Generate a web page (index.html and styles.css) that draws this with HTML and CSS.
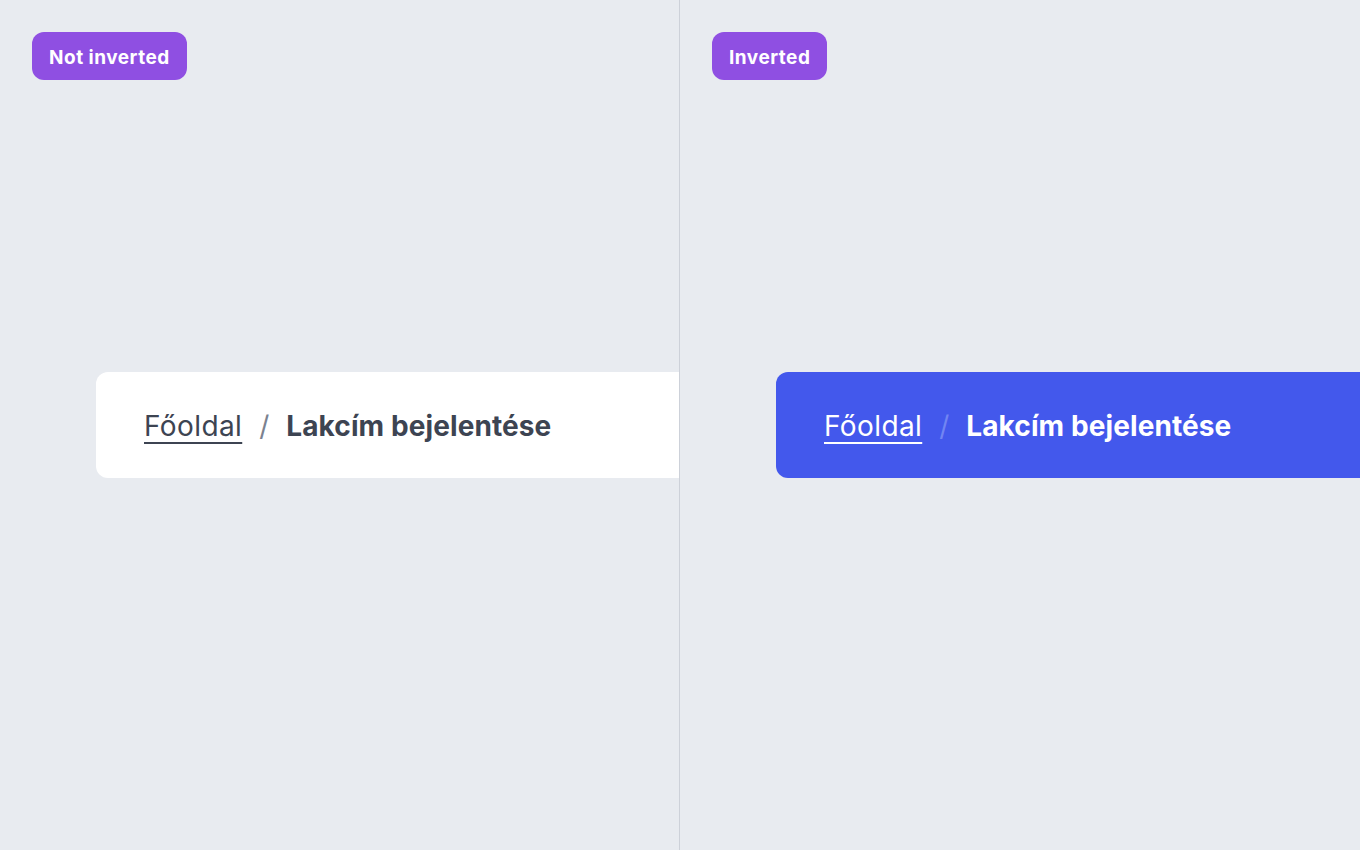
FILE: index.html
```html
<!DOCTYPE html>
<html lang="hu">
<head>
    <meta charset="UTF-8">
    <meta name="viewport" content="width=device-width, initial-scale=1.0">
    <title>Breadcrumb</title>
    <link rel="stylesheet" href="styles.css">
</head>
<body>
    <div class="stage">
        <!-- Not inverted -->
        <section class="panel panel-left">
            <span class="badge">Not inverted</span>
            <nav class="breadcrumb">
                <a href="#" class="crumb-link">Főoldal</a>
                <span class="crumb-sep">/</span>
                <span class="crumb-current">Lakcím bejelentése</span>
            </nav>
        </section>

        <!-- Inverted -->
        <section class="panel">
            <span class="badge">Inverted</span>
            <nav class="breadcrumb breadcrumb-inverted">
                <a href="#" class="crumb-link">Főoldal</a>
                <span class="crumb-sep">/</span>
                <span class="crumb-current">Lakcím bejelentése</span>
            </nav>
        </section>
    </div>
</body>
</html>
```

FILE: styles.css
```css
/* Reset */
* {
    margin: 0;
    padding: 0;
    box-sizing: border-box;
}

body {
    font-family: Inter, "Noto Sans", sans-serif;
    background: #e8ebf0;
    color: #3d4452;
}

.stage {
    display: grid;
    grid-template-columns: 680px 680px;
    height: 850px;
}

.panel {
    position: relative;
    display: flex;
    align-items: center;
    padding-left: 96px;
}

.panel-left {
    border-right: 1px solid #cdd1d9;
}

.badge {
    position: absolute;
    top: 32px;
    left: 32px;
    height: 48px;
    padding: 2px 17px 0;
    display: flex;
    align-items: center;
    background: #8f4fe2;
    color: #fff;
    font-size: 19px;
    font-weight: 700;
    letter-spacing: 0.5px;
    border-radius: 12px;
}

.breadcrumb {
    flex: 1;
    height: 106px;
    display: flex;
    align-items: center;
    gap: 17px;
    padding: 2px 0 0 48px;
    background: #fff;
    border-radius: 12px 0 0 12px;
    font-size: 28px;
}

.crumb-link {
    color: #3d4452;
    letter-spacing: 0.4px;
    text-decoration: underline;
    text-decoration-thickness: 2px;
    text-underline-offset: 6px;
}

.crumb-sep {
    color: #7b8290;
}

.crumb-current {
    font-weight: 700;
    letter-spacing: 0.1px;
}

.breadcrumb-inverted {
    background: #4358ec;
    color: #fff;
}

.breadcrumb-inverted .crumb-link {
    color: #fff;
}

.breadcrumb-inverted .crumb-sep {
    color: #7285f2;
}
```
